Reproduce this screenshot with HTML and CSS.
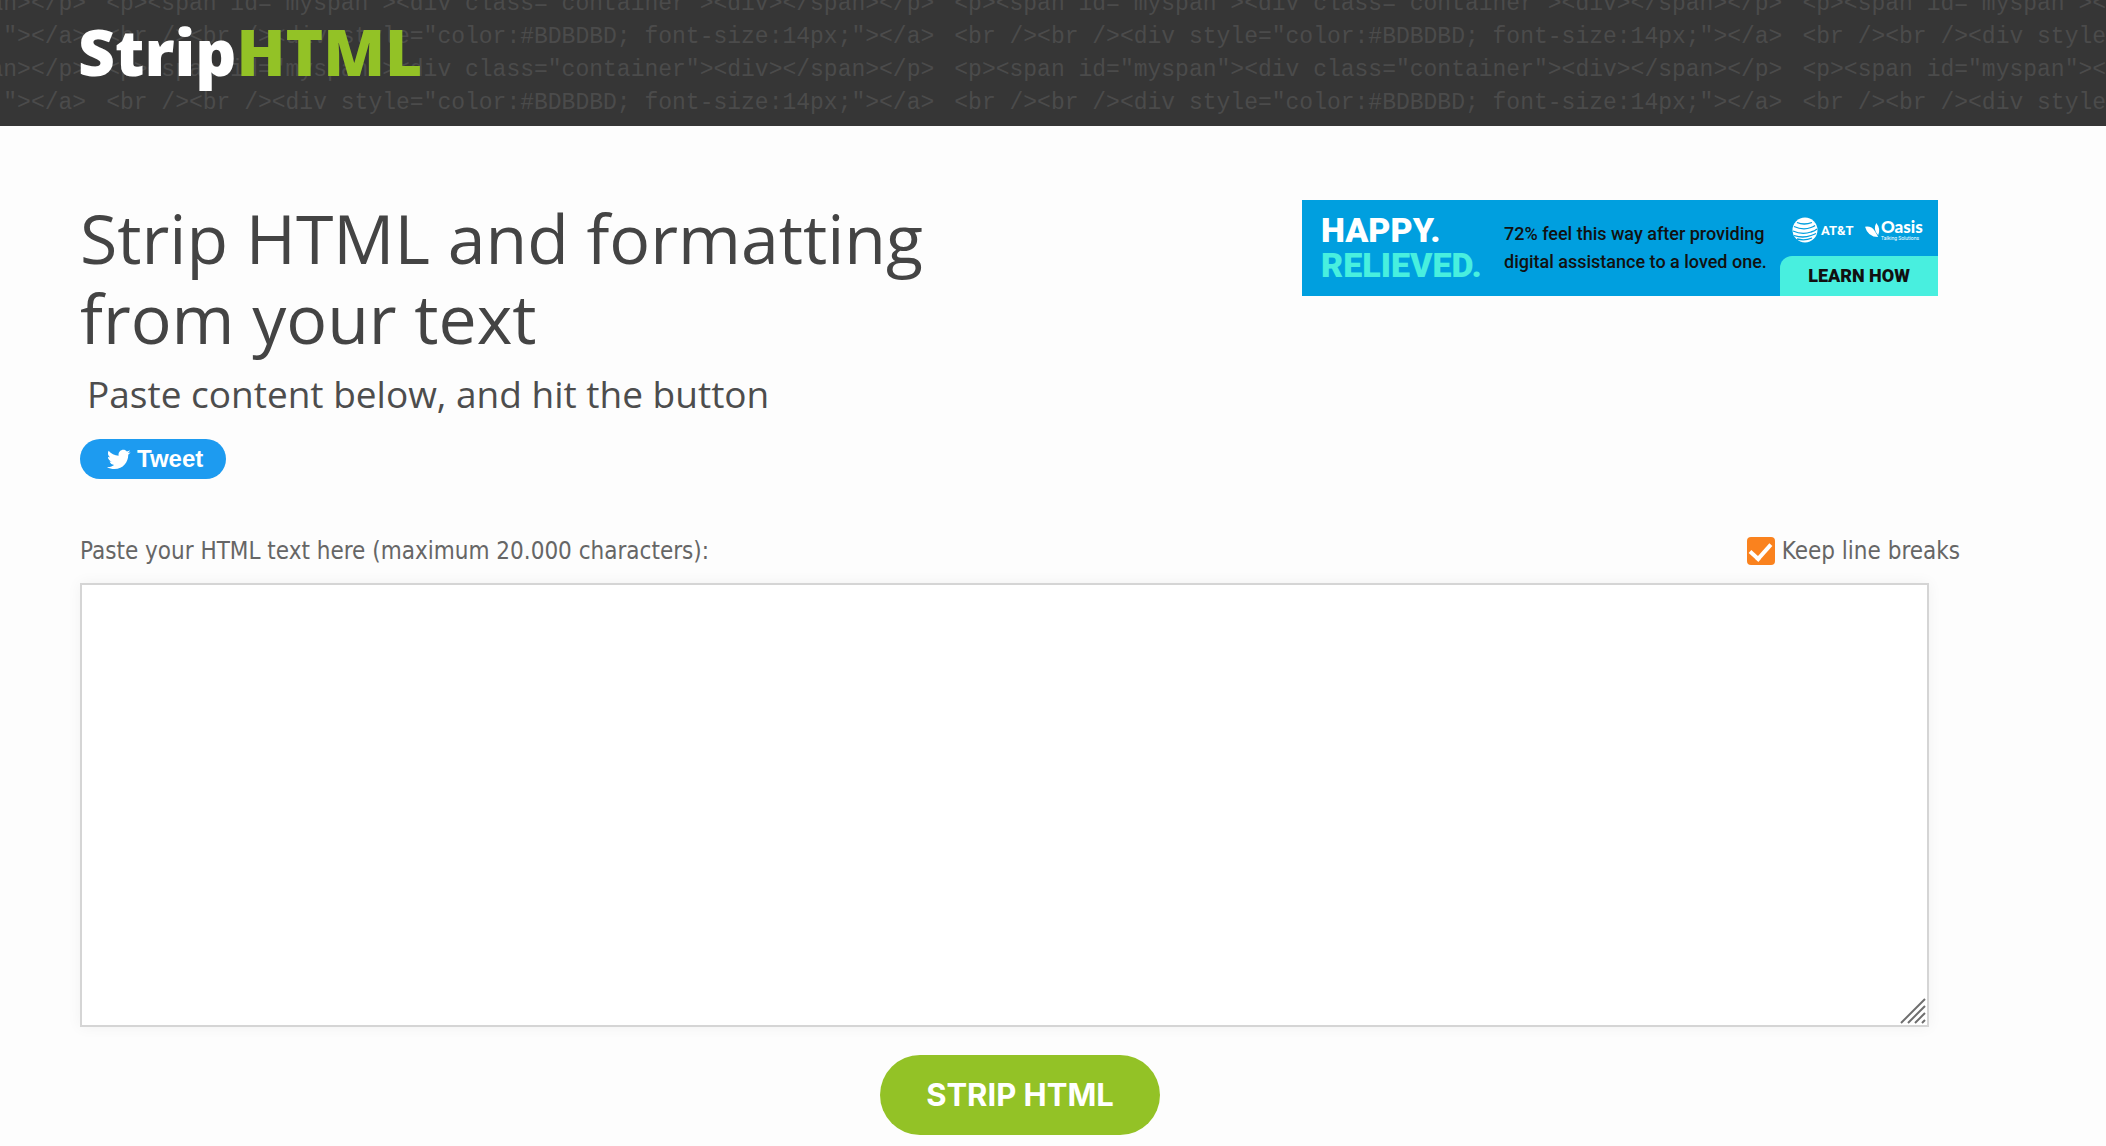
FILE: index.html
```html
<!DOCTYPE html>
<html lang="en">
<head>
<meta charset="utf-8">
<title>StripHTML</title>
<meta name="viewport" content="width=device-width, initial-scale=1">
<link rel="stylesheet" href="styles.css">
</head>
<body>
<header class="site-header">
  <div class="code-pattern" aria-hidden="true">
    <div class="code-line"><span>&lt;p&gt;&lt;span id="myspan"&gt;&lt;div class="container"&gt;&lt;div&gt;&lt;/span&gt;&lt;/p&gt;</span><span>&lt;p&gt;&lt;span id="myspan"&gt;&lt;div class="container"&gt;&lt;div&gt;&lt;/span&gt;&lt;/p&gt;</span><span>&lt;p&gt;&lt;span id="myspan"&gt;&lt;div class="container"&gt;&lt;div&gt;&lt;/span&gt;&lt;/p&gt;</span><span>&lt;p&gt;&lt;span id="myspan"&gt;&lt;div class="container"&gt;&lt;div&gt;&lt;/span&gt;&lt;/p&gt;</span></div>
    <div class="code-line"><span>&lt;br /&gt;&lt;br /&gt;&lt;div style="color:#BDBDBD; font-size:14px;"&gt;&lt;/a&gt;</span><span>&lt;br /&gt;&lt;br /&gt;&lt;div style="color:#BDBDBD; font-size:14px;"&gt;&lt;/a&gt;</span><span>&lt;br /&gt;&lt;br /&gt;&lt;div style="color:#BDBDBD; font-size:14px;"&gt;&lt;/a&gt;</span><span>&lt;br /&gt;&lt;br /&gt;&lt;div style="color:#BDBDBD; font-size:14px;"&gt;&lt;/a&gt;</span></div>
    <div class="code-line"><span>&lt;p&gt;&lt;span id="myspan"&gt;&lt;div class="container"&gt;&lt;div&gt;&lt;/span&gt;&lt;/p&gt;</span><span>&lt;p&gt;&lt;span id="myspan"&gt;&lt;div class="container"&gt;&lt;div&gt;&lt;/span&gt;&lt;/p&gt;</span><span>&lt;p&gt;&lt;span id="myspan"&gt;&lt;div class="container"&gt;&lt;div&gt;&lt;/span&gt;&lt;/p&gt;</span><span>&lt;p&gt;&lt;span id="myspan"&gt;&lt;div class="container"&gt;&lt;div&gt;&lt;/span&gt;&lt;/p&gt;</span></div>
    <div class="code-line"><span>&lt;br /&gt;&lt;br /&gt;&lt;div style="color:#BDBDBD; font-size:14px;"&gt;&lt;/a&gt;</span><span>&lt;br /&gt;&lt;br /&gt;&lt;div style="color:#BDBDBD; font-size:14px;"&gt;&lt;/a&gt;</span><span>&lt;br /&gt;&lt;br /&gt;&lt;div style="color:#BDBDBD; font-size:14px;"&gt;&lt;/a&gt;</span><span>&lt;br /&gt;&lt;br /&gt;&lt;div style="color:#BDBDBD; font-size:14px;"&gt;&lt;/a&gt;</span></div>
  </div>
  <a class="logo" href="#">Strip<span class="logo-accent">HTML</span></a>
</header>
<main class="page">
  <section class="intro">
    <div class="intro-text">
      <h1>Strip HTML and formatting<br>from your text</h1>
      <p class="lead">Paste content below, and hit the button</p>
      <a class="tweet" href="#">
        <svg class="tweet-icon" viewBox="0 0 24 24" aria-hidden="true"><path d="M23.643 4.937c-.835.37-1.732.62-2.675.733.962-.576 1.7-1.49 2.048-2.578-.9.534-1.897.922-2.958 1.13-.85-.904-2.06-1.47-3.4-1.47-2.572 0-4.658 2.086-4.658 4.66 0 .364.042.718.12 1.06-3.873-.195-7.304-2.05-9.602-4.868-.4.69-.63 1.49-.63 2.342 0 1.616.823 3.043 2.072 3.878-.764-.025-1.482-.234-2.11-.583v.06c0 2.257 1.605 4.14 3.737 4.568-.392.106-.803.162-1.227.162-.3 0-.593-.028-.877-.082.593 1.85 2.313 3.198 4.352 3.234-1.595 1.25-3.604 1.995-5.786 1.995-.376 0-.747-.022-1.112-.065 2.062 1.323 4.51 2.093 7.14 2.093 8.57 0 13.255-7.098 13.255-13.254 0-.2-.005-.402-.014-.602.91-.658 1.7-1.477 2.323-2.41z"/></svg>
        <span>Tweet</span>
      </a>
    </div>
    <a class="ad" href="#">
      <span class="ad-title">HAPPY.<br><span class="ad-mint">RELIEVED.</span></span>
      <span class="ad-copy">72% feel this way after providing<br>digital assistance to a loved one.</span>
      <span class="ad-side">
        <span class="ad-brands">
          <svg class="globe" viewBox="0 0 26 26" aria-hidden="true"><circle cx="13" cy="13" r="12.5" fill="#fff"/><g fill="none" stroke="#009fdf" stroke-width="1.3"><path d="M5 5.5q7 3 15 0M2 9.5q9 4 17 1q3-1 4-2M1 14q9 4 18 1q4-1 6-3M2 18.5q9 3 17 0q3-1 5-2M5 22q8 2 15-1"/></g></svg>
          <span class="att">AT&amp;T</span>
          <svg class="leaf" viewBox="0 0 17 16" aria-hidden="true"><path fill="#fff" d="M0 4q7-1 10 4q2 3 4 7Q3 15 0 4zM12 0q5 6 2 13Q8 7 12 0z"/></svg>
          <span class="oasis"><span class="oasis-name">Oasis</span><span class="oasis-tag">Talking Solutions</span></span>
        </span>
        <span class="ad-cta">LEARN HOW</span>
      </span>
    </a>
  </section>
  <form class="strip-form">
    <div class="form-head">
      <label for="source">Paste your HTML text here (maximum 20.000 characters):</label>
      <span class="option">
        <input type="checkbox" id="breaks" checked>
        <label for="breaks">Keep line breaks</label>
      </span>
    </div>
    <div class="source-box">
      <textarea id="source"></textarea>
      <svg class="grip" viewBox="0 0 26 26" aria-hidden="true"><path d="M1 25L25 1M8 25L25 8M15 25L25 15M22 25L25 22" fill="none" stroke="#6f6f6f" stroke-width="2"/></svg>
    </div>
    <button class="submit" type="button">STRIP HTML</button>
  </form>
</main>
</body>
</html>
```

FILE: styles.css
```css
* { box-sizing: border-box; }
body { margin: 0; background: #fdfdfd; color: #444; font-family: "Open Sans", sans-serif; }
a { text-decoration: none; }

.site-header { position: relative; height: 126px; padding: 8px 78px; overflow: hidden; background: #363636; }
.code-pattern { position: absolute; top: -12px; left: -742px; color: #4b4b4b; font: 23px/33px "Liberation Mono", monospace; }
.code-line { display: flex; gap: 20px; white-space: pre; }
.logo { position: relative; display: inline-block; color: #fff; font-size: 64px; line-height: 88px; font-weight: 800; }
.logo-accent { color: #93c226; }

.page { padding: 72px 146px 10px 80px; }
.intro { display: flex; justify-content: space-between; align-items: flex-start; }
.intro-text { display: flex; flex-direction: column; align-items: flex-start; }
h1 { margin: 0; font-size: 68px; line-height: 80px; font-weight: 400; color: #444; }
.lead { margin: 8px 0 17px 7px; font-size: 37px; line-height: 56px; color: #4d4d4d; }
.tweet { display: flex; align-items: center; gap: 6px; height: 40px; padding: 0 23px 0 26px; border-radius: 20px; background: #1d9bf0; color: #fff; font: bold 24px/40px "Liberation Sans", sans-serif; }
.tweet-icon { width: 25px; height: 25px; fill: #fff; }

.ad { display: flex; width: 636px; height: 96px; margin: 2px 22px 0 0; background: #009fdf; color: #111; font-family: Roboto, sans-serif; white-space: nowrap; }
.ad-title { width: 202px; padding: 13px 0 0 19px; color: #fff; font-size: 34px; line-height: 35px; font-weight: 900; }
.ad-mint { color: #48efdf; }
.ad-copy { flex: 1; padding-top: 20px; font-size: 18px; line-height: 28px; font-weight: 500; }
.ad-side { display: flex; flex-direction: column; width: 158px; }
.ad-brands { display: flex; align-items: center; height: 56px; padding: 4px 0 0 12px; color: #fff; }
.globe { width: 26px; height: 26px; margin-right: 3px; }
.att { width: 44px; font-size: 13px; font-weight: 700; }
.leaf { width: 16px; height: 15px; }
.oasis { display: flex; flex-direction: column; }
.oasis-name { font: 900 17px/16px Lato, sans-serif; }
.oasis-tag { font-size: 5px; line-height: 6px; }
.ad-cta { height: 40px; border-radius: 12px 0 0 0; background: #48efdf; text-align: center; font-size: 18px; line-height: 40px; font-weight: 900; }

.strip-form { display: flex; flex-direction: column; margin-top: 56px; color: #666; font: 24px/32px "DejaVu Sans Condensed", "DejaVu Sans", sans-serif; }
.form-head { display: flex; justify-content: space-between; }
.option { display: flex; align-items: center; gap: 7px; }
.option input { appearance: none; width: 28px; height: 28px; margin: 0; border-radius: 4px; background: #fa821e; display: grid; place-items: center; }
.option input:checked::before { content: ""; width: 9px; height: 17px; margin-bottom: 4px; border: solid #fff; border-width: 0 4px 4px 0; transform: rotate(42deg); }
.source-box { position: relative; margin: 16px 31px 28px 0; }
textarea { display: block; width: 100%; height: 444px; padding: 8px; border: 2px solid #d5d5d5; background: #fff; box-shadow: 0 0 14px rgba(0, 0, 0, .05); color: #444; font: inherit; resize: none; outline: 0; }
.grip { position: absolute; right: 3px; bottom: 3px; width: 26px; height: 26px; pointer-events: none; }
.submit { align-self: center; width: 280px; height: 80px; border: 0; border-radius: 40px; background: #93c226; color: #fff; font: 700 31px/40px Inter, sans-serif; }
```
